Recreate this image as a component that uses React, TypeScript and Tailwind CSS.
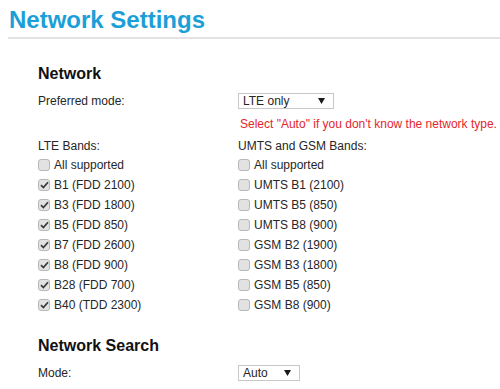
import { useState } from 'react';

type Band = { label: string; checked: boolean };

const lteBands: Band[] = [
  { label: 'All supported', checked: false },
  { label: 'B1 (FDD 2100)', checked: true },
  { label: 'B3 (FDD 1800)', checked: true },
  { label: 'B5 (FDD 850)', checked: true },
  { label: 'B7 (FDD 2600)', checked: true },
  { label: 'B8 (FDD 900)', checked: true },
  { label: 'B28 (FDD 700)', checked: true },
  { label: 'B40 (TDD 2300)', checked: true }
];

const umtsBands: Band[] = [
  { label: 'All supported', checked: false },
  { label: 'UMTS B1 (2100)', checked: false },
  { label: 'UMTS B5 (850)', checked: false },
  { label: 'UMTS B8 (900)', checked: false },
  { label: 'GSM B2 (1900)', checked: false },
  { label: 'GSM B3 (1800)', checked: false },
  { label: 'GSM B5 (850)', checked: false },
  { label: 'GSM B8 (900)', checked: false }
];

const CheckRow = ({ label, checked }: Band) => (
  <div className="flex h-5 items-center">
    <span className="flex h-[12px] w-[12px] items-center justify-center rounded-[3px] border border-[#b8b8b8] bg-[#e2e2e2]">
      {checked && (
        <svg width="9" height="8" viewBox="0 0 9 8">
          <path d="M1 4.2 L3.4 6.6 L8 1.2" fill="none" stroke="#3a3a3a" strokeWidth="1.7" />
        </svg>
      )}
    </span>
    <span className="ml-[4px]">{label}</span>
  </div>
);

const SelectBox = ({ value, width }: { value: string; width: string }) => (
  <div className={`flex h-4 items-center justify-between border border-[#c8c8c8] bg-white pl-[4px] pr-[8px] ${width}`}>
    <span className="leading-none">{value}</span>
    <svg width="7" height="6" viewBox="0 0 7 6">
      <path d="M0 0 L7 0 L3.5 6 Z" fill="#1a1a1a" />
    </svg>
  </div>
);

export default function App() {
  const [mode] = useState('LTE only');

  return (
    <div className="h-[389px] w-[500px] overflow-hidden bg-white font-['Liberation_Sans',Arial,sans-serif] text-[12px] leading-4 text-[#262626]">
      <h1 className="ml-[9px] pt-[6px] text-[24px] font-bold leading-[28px] text-[#1c9fd8]">Network Settings</h1>
      <div className="ml-[8px] mt-[3px] h-[2px] bg-[#e3e3e3]" />

      <div className="pl-[38px]">
        <h2 className="mt-[25px] text-[16px] font-bold leading-5 text-[#111]">Network</h2>

        <div className="mt-[9px] flex">
          <div className="w-[200px]">Preferred mode:</div>
          <SelectBox value={mode} width="w-[96px]" />
        </div>
        <div className="mt-[7px] pl-[202px] text-[#e3262c]">Select "Auto" if you don't know the network type.</div>

        <div className="mt-[6px] flex">
          <div className="w-[200px]">
            <div>LTE Bands:</div>
            <div className="mt-px">
              {lteBands.map((b) => (
                <CheckRow key={b.label} {...b} />
              ))}
            </div>
          </div>
          <div>
            <div>UMTS and GSM Bands:</div>
            <div className="mt-px">
              {umtsBands.map((b) => (
                <CheckRow key={b.label} {...b} />
              ))}
            </div>
          </div>
        </div>

        <h2 className="mt-[21px] text-[16px] font-bold leading-5 text-[#111]">Network Search</h2>
        <div className="mt-[9px] flex">
          <div className="w-[200px]">Mode:</div>
          <SelectBox value="Auto" width="w-[62px]" />
        </div>
      </div>
    </div>
  );
}
